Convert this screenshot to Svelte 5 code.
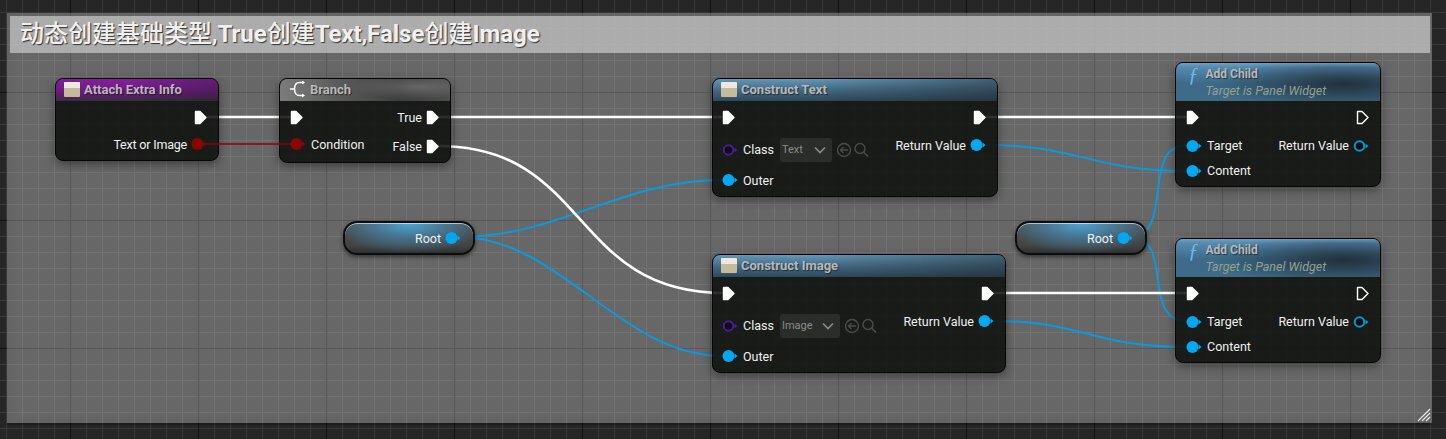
<script>
  // wires run under the translucent nodes, same as the blueprint editor
  const blue = [
    "M458 237 C 560 237, 620 180, 723 180",
    "M458 237 C 560 237, 620 356, 723 356",
    "M985 145 C 1080 145, 1090 171, 1187 171",
    "M993 321 C 1085 321, 1090 347, 1187 347",
    "M1130 237 C 1175 237, 1140 145, 1187 145",
    "M1130 237 C 1175 237, 1140 321, 1187 321",
  ];
  const white = [
    "M207 117 H291",
    "M438 117 H724",
    "M438 146 C 590 146, 570 293, 724 293",
    "M983 117 H1187",
    "M993 293 H1187",
  ];
</script>

{#snippet exec(hollow = false)}
  <svg class="pin" width="13" height="15" viewBox="0 0 13 15">
    <path
      d="M1.5 1.5 H6 L12 7.5 L6 13.5 H1.5 Z"
      fill={hollow ? "none" : "#fff"}
      stroke="#fff"
      stroke-width="1.4"
      stroke-linejoin="round"
    />
  </svg>
{/snippet}

{#snippet pin(color, hollow = false)}
  <svg class="pin" width="16" height="14" viewBox="0 0 16 14">
    {#if hollow}
      <circle cx="6.5" cy="7" r="4.8" fill="#0c0e0e" stroke={color} stroke-width="2" />
    {:else}
      <circle cx="6.5" cy="7" r="6" fill={color} />
    {/if}
    <path d="M12.5 4.5 L15.5 7 L12.5 9.5 Z" fill={color} />
  </svg>
{/snippet}

{#snippet classIcon()}
  <span class="class-icon"><i></i></span>
{/snippet}

{#snippet picker(label, width)}
  <span class="picker" style="width: {width}px">
    <span>{label}</span>
    <svg width="12" height="8" viewBox="0 0 12 8"><path d="M1 1.5 L6 6.5 L11 1.5" fill="none" stroke="#8b8b8b" stroke-width="1.6" /></svg>
  </span>
  <svg class="tools" width="34" height="18" viewBox="0 0 34 18">
    <circle cx="8" cy="9" r="6.5" fill="none" stroke="#4a4c4a" stroke-width="1.4" />
    <path d="M12 9 H4.5 M7.5 6 L4.5 9 L7.5 12" fill="none" stroke="#4a4c4a" stroke-width="1.4" />
    <circle cx="24" cy="7.5" r="5" fill="none" stroke="#4a4c4a" stroke-width="1.4" />
    <path d="M27.5 11 L32 15.5" stroke="#4a4c4a" stroke-width="1.6" />
  </svg>
{/snippet}

{#snippet addChild(cls)}
  <div class="node add-child {cls}">
    <div class="head func">
      <span class="f">ƒ</span>
      <div>
        <div class="title">Add Child</div>
        <div class="sub">Target is Panel Widget</div>
      </div>
    </div>
    <div class="body">
      <div class="col">
        <div class="row h33">{@render exec()}</div>
        <div class="row h23">{@render pin("#00a8f2")}<span>Target</span></div>
        <div class="row h27">{@render pin("#00a8f2")}<span>Content</span></div>
      </div>
      <div class="col right">
        <div class="row h33">{@render exec(true)}</div>
        <div class="row h23"><span>Return Value</span>{@render pin("#0a93d6", true)}</div>
      </div>
    </div>
  </div>
{/snippet}

<div class="canvas">
  <div class="comment">
    <div class="comment-title">动态创建基础类型,<b>True</b>创建<b>Text</b>,<b>False</b>创建<b>Image</b></div>
    <svg class="grip" width="14" height="14" viewBox="0 0 14 14">
      <path d="M1 13 L13 1 M5 13 L13 5 M9 13 L13 9" stroke="#e6e6e6" stroke-width="1.2" />
    </svg>
  </div>

  <svg class="wires" width="1446" height="439">
    {#each blue as d}
      <path {d} fill="none" stroke="#0a9ae0" stroke-width="2" />
    {/each}
    {#each white as d}
      <path {d} fill="none" stroke="#fff" stroke-width="2.6" />
    {/each}
  </svg>

  <div class="node attach">
    <div class="head purple">
      {@render classIcon()}
      <span class="title">Attach Extra Info</span>
    </div>
    <div class="body">
      <div class="col"></div>
      <div class="col right">
        <div class="row h32">{@render exec()}</div>
        <div class="row h22"><span class="tight">Text or Image</span>{@render pin("#8c0505")}</div>
      </div>
    </div>
  </div>

  <div class="node branch">
    <div class="head grey">
      <svg width="18" height="18" viewBox="0 0 18 18">
        <path d="M15 2.5 H10.5 Q5.5 2.5 5.5 9 Q5.5 15.5 10.5 15.5 H15 M1 9 H5.5" fill="none" stroke="#fff" stroke-width="1.5" />
        <path d="M13 .5 L16 2.5 L13 4.5 Z M13 13.5 L16 15.5 L13 17.5 Z" fill="#fff" />
      </svg>
      <span class="title">Branch</span>
    </div>
    <div class="body">
      <div class="col">
        <div class="row h32">{@render exec()}</div>
        <div class="row h22">{@render pin("#8c0505")}<span>Condition</span></div>
      </div>
      <div class="col right">
        <div class="row h32"><span>True</span>{@render exec()}</div>
        <div class="row h26"><span>False</span>{@render exec()}</div>
      </div>
    </div>
  </div>

  <div class="node construct construct-text">
    <div class="head steel">
      {@render classIcon()}
      <span class="title">Construct Text</span>
    </div>
    <div class="body">
      <div class="col">
        <div class="row h32">{@render exec()}</div>
        <div class="row h33">{@render pin("#4b1a9c", true)}<span>Class</span>{@render picker("Text", 52)}</div>
        <div class="row h28">{@render pin("#00a8f2")}<span>Outer</span></div>
      </div>
      <div class="col right">
        <div class="row h32">{@render exec()}</div>
        <div class="row h24"><span>Return Value</span>{@render pin("#00a8f2")}</div>
      </div>
    </div>
  </div>

  <div class="node construct construct-image">
    <div class="head steel">
      {@render classIcon()}
      <span class="title">Construct Image</span>
    </div>
    <div class="body">
      <div class="col">
        <div class="row h32">{@render exec()}</div>
        <div class="row h33">{@render pin("#4b1a9c", true)}<span>Class</span>{@render picker("Image", 60)}</div>
        <div class="row h28">{@render pin("#00a8f2")}<span>Outer</span></div>
      </div>
      <div class="col right">
        <div class="row h32">{@render exec()}</div>
        <div class="row h24"><span>Return Value</span>{@render pin("#00a8f2")}</div>
      </div>
    </div>
  </div>

  {@render addChild("first")}
  {@render addChild("second")}

  <div class="pill root-a"><span>Root</span>{@render pin("#00a8f2")}</div>
  <div class="pill root-b"><span>Root</span>{@render pin("#00a8f2")}</div>

  <!-- the red wire stays readable over the nodes -->
  <svg class="wires" width="1446" height="439">
    <path d="M206 144 H291" fill="none" stroke="#8c0505" stroke-width="1.6" />
  </svg>
</div>

<style>
  :global(body) {
    margin: 0;
    background: #262626;
  }

  .canvas {
    position: relative;
    width: 1446px;
    height: 439px;
    overflow: hidden;
    font-family: Roboto, "Noto Sans", sans-serif;
    font-size: 12.5px;
    color: #f0f0f0;
    background-color: #262626;
    background-image:
      linear-gradient(#111 1px, transparent 1px),
      linear-gradient(90deg, #111 1px, transparent 1px),
      linear-gradient(#383838 1px, transparent 1px),
      linear-gradient(90deg, #383838 1px, transparent 1px);
    background-size:
      128px 128px,
      128px 128px,
      16px 16px,
      16px 16px;
    background-position:
      0 92px,
      70px 0,
      0 12px,
      6px 0;
  }

  /* comment box */
  .comment {
    position: absolute;
    left: 7px;
    top: 13px;
    width: 1425px;
    height: 410px;
    box-sizing: border-box;
    padding: 3px 2px 0 3px;
    background: rgba(255, 255, 255, 0.3);
    box-shadow:
      0 2px 0 rgba(0, 0, 0, 0.25),
      inset 0 0 12px rgba(0, 0, 0, 0.08);
  }

  .comment-title {
    height: 37px;
    box-sizing: border-box;
    padding-left: 10px;
    line-height: 37px;
    font-family: Roboto, "Noto Sans CJK SC", sans-serif;
    font-size: 24px;
    font-weight: 500;
    color: #f0f0f0;
    text-shadow: 1px 1px 1px rgba(0, 0, 0, 0.7);
    background: rgba(190, 190, 190, 0.8);
  }

  .comment-title b {
    font-weight: 700;
  }

  .grip {
    position: absolute;
    right: 1px;
    bottom: 1px;
  }

  .wires {
    position: absolute;
    left: 0;
    top: 0;
    pointer-events: none;
  }

  /* nodes */
  .node {
    position: absolute;
    box-sizing: border-box;
    border: 1.5px solid #060606;
    border-radius: 8px;
    background: rgba(14, 16, 14, 0.87);
    box-shadow: 0 3px 10px rgba(0, 0, 0, 0.4);
    overflow: hidden;
  }

  .attach { left: 55px; top: 78px; width: 164px; height: 83px; }
  .branch { left: 279px; top: 78px; width: 172px; height: 85px; }
  .construct-text { left: 712px; top: 78px; width: 286px; height: 119px; }
  .construct-image { left: 712px; top: 254px; width: 294px; height: 119px; }
  .first { left: 1175px; top: 62px; }
  .second { left: 1175px; top: 238px; }

  .add-child {
    width: 206px;
    height: 125px;
  }

  .head {
    display: flex;
    align-items: center;
    gap: 4px;
    box-sizing: border-box;
    height: 22px;
    padding-left: 8px;
    padding-bottom: 2px;
  }

  .purple {
    background:
      linear-gradient(90deg, transparent 45%, rgba(30, 30, 30, 0.35) 100%),
      linear-gradient(180deg, #81209a 0%, #701985 55%, #3a2c40 100%);
  }

  .grey {
    gap: 3px;
    padding-left: 9px;
    background:
      radial-gradient(70px 12px at 82% 35%, rgba(130, 130, 130, 0.55), transparent),
      linear-gradient(90deg, #7c7c7c 0%, #5a5a5a 35%, #3f3f3f 70%, #4c4c4c 100%);
  }

  .steel {
    background:
      linear-gradient(90deg, transparent 35%, rgba(25, 32, 38, 0.45) 100%),
      linear-gradient(180deg, #6496b6 0%, #436b85 50%, #30475a 100%);
  }

  .func {
    height: 38px;
    gap: 7px;
    padding-left: 12px;
    padding-top: 1px;
    padding-bottom: 0;
    align-items: flex-start;
    background:
      linear-gradient(180deg, rgba(120, 175, 210, 0.5) 0, transparent 4px),
      radial-gradient(130px 26px at 82% 55%, rgba(28, 38, 46, 0.85), transparent),
      linear-gradient(180deg, #5b92b8 0%, #3c6a88 55%, #3f6b88 100%);
  }

  .title {
    font-size: 13px;
    font-weight: 700;
    color: #b8b8b8;
    text-shadow: 1px 1px 1px rgba(0, 0, 0, 0.5);
  }

  .func .title {
    font-size: 12px;
    line-height: 20px;
  }

  .sub {
    line-height: 14px;
    font-style: italic;
    color: #94a08f;
  }

  .f {
    font-family: "Liberation Serif", serif;
    font-style: italic;
    font-size: 21px;
    line-height: 22px;
    color: #6fb6e6;
  }

  .class-icon {
    display: block;
    width: 16px;
    height: 15px;
    border-radius: 1px;
    background: #c2bb9c;
  }

  .class-icon i {
    display: block;
    height: 6px;
    border-radius: 1px 1px 0 0;
    background: #ece9de;
  }

  .body {
    display: flex;
    justify-content: space-between;
    padding: 0 11px 0 10px;
  }

  .construct .body {
    padding-left: 9px;
  }

  .col {
    display: flex;
    flex-direction: column;
  }

  .right {
    align-items: flex-end;
  }

  .row {
    display: flex;
    align-items: center;
    gap: 5px;
  }

  .right .row {
    justify-content: flex-end;
    gap: 4px;
  }

  .tight {
    letter-spacing: -0.2px;
  }

  .h22 { height: 22px; }
  .h23 { height: 23px; }
  .h24 { height: 24px; }
  .h26 { height: 26px; }
  .h27 { height: 27px; }
  .h28 { height: 28px; }
  .h32 { height: 32px; }
  .h33 { height: 33px; }

  .pin {
    display: block;
    flex: none;
  }

  .picker {
    display: flex;
    align-items: center;
    justify-content: space-between;
    box-sizing: border-box;
    height: 24px;
    margin-left: 1px;
    padding: 0 6px 0 2px;
    border-radius: 3px;
    font-size: 11px;
    color: #8a8a8a;
    background: #2b2d2b;
  }

  .tools {
    display: block;
    flex: none;
    margin-left: -1px;
  }

  .pill {
    position: absolute;
    display: flex;
    align-items: center;
    justify-content: flex-end;
    gap: 4px;
    box-sizing: border-box;
    width: 132px;
    height: 34px;
    padding-right: 12px;
    border: 2px solid #0d0d0d;
    border-radius: 14px;
    background:
      radial-gradient(78px 30px at 50% 0, #4ea6d8 0%, rgba(72, 150, 195, 0.6) 45%, transparent 100%),
      linear-gradient(180deg, #4a4c4c 0%, #424444 75%, #303131 100%);
    box-shadow:
      inset 0 1px 0 rgba(255, 255, 255, 0.6),
      0 2px 4px rgba(0, 0, 0, 0.5);
  }

  .root-a { left: 343px; top: 221px; }
  .root-b { left: 1015px; top: 221px; }
</style>
